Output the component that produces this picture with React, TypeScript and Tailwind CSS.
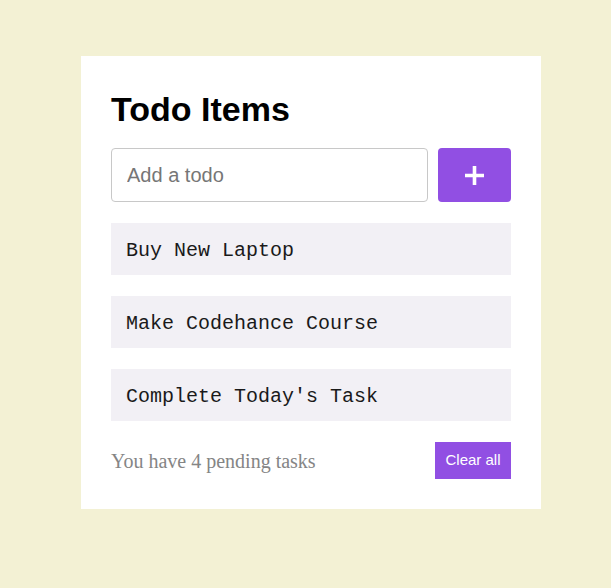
import React from "react";

export default function App() {
  const items = ["Buy New Laptop", "Make Codehance Course", "Complete Today's Task"];
  return (
    <div className="min-h-[588px] w-full bg-[#f3f1d4] pt-[56px] pl-[81px]">
      <div className="w-[460px] bg-white px-[30px] pt-[30px] pb-[30px]">
        <div
          className="mt-[6px] mb-[22px] text-[34px] leading-[34px] font-bold text-black"
          style={{ fontFamily: '"Liberation Sans", Arial, sans-serif' }}
        >
          Todo Items
        </div>
        <div className="flex gap-[10px]">
          <input
            placeholder="Add a todo"
            className="h-[54px] w-[317px] rounded-[4px] border border-[#c8c8c8] bg-white px-[15px] text-[20px] text-black outline-none placeholder:text-[#767676]"
            style={{ fontFamily: '"Liberation Sans", Arial, sans-serif' }}
          />
          <button className="flex h-[54px] w-[73px] items-center justify-center rounded-[4px] bg-[#914fe3]">
            <svg width="21" height="21" viewBox="0 0 21 21">
              <path d="M10.5 1v19M1 10.5h19" stroke="white" strokeWidth="3.6" />
            </svg>
          </button>
        </div>
        <div className="mt-[21px] flex flex-col gap-[21px]">
          {items.map((t) => (
            <div
              key={t}
              className="flex h-[52px] items-center bg-[#f2f0f5] px-[15px] pt-[3px] text-[20px] text-[#1a1a1a]"
              style={{ fontFamily: '"Liberation Mono", "Courier New", monospace' }}
            >
              {t}
            </div>
          ))}
        </div>
        <div className="mt-[21px] flex h-[37px] items-center justify-between">
          <span
            className="text-[20px] text-[#858585]"
            style={{ fontFamily: '"Liberation Serif", "Times New Roman", serif' }}
          >
            You have 4 pending tasks
          </span>
          <button
            className="h-[37px] w-[76px] bg-[#914fe3] text-[15px] text-white"
            style={{ fontFamily: '"Liberation Sans", Arial, sans-serif' }}
          >
            Clear all
          </button>
        </div>
      </div>
    </div>
  );
}
